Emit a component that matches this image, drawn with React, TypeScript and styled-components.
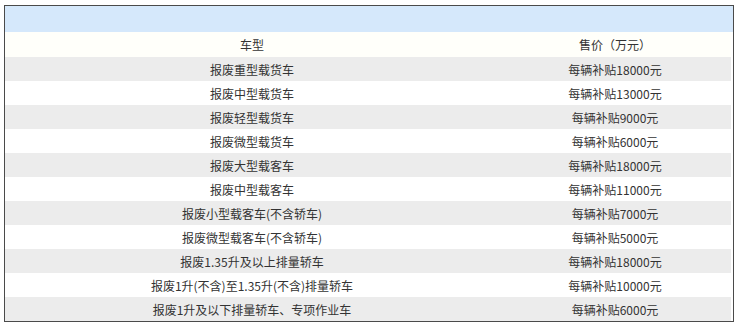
import React from "react";
import styled, { createGlobalStyle } from "styled-components";

const Global = createGlobalStyle`
  html, body { margin: 0; padding: 0; background: #ffffff; }
  body {
    font-family: "Microsoft YaHei", "Noto Sans CJK SC", "Noto Sans", sans-serif;
  }
`;

const Page = styled.div`
  padding: 5px 0 0 4px;
`;

const Table = styled.div`
  width: 728px;
  border: 1px solid #4a4a4a;
  background: #ffffff;
  display: flex;
  flex-direction: column;
`;

const Caption = styled.div`
  height: 26px;
  background: #d5e8fb;
`;

const Row = styled.div<{ $shade: "head" | "gray" | "white" }>`
  display: grid;
  grid-template-columns: 494px 1fr;
  height: ${(p) => (p.$shade === "head" ? 25 : 24)}px;
  margin-right: 2px;
  background: ${(p) =>
    p.$shade === "gray" ? "#ececec" : p.$shade === "head" ? "#fffffa" : "#ffffff"};
`;

const Cell = styled.div`
  display: flex;
  align-items: center;
  justify-content: center;
  font-size: 12px;
  color: #333333;
  white-space: nowrap;
`;

const rows: [string, string][] = [
  ["报废重型载货车", "每辆补贴18000元"],
  ["报废中型载货车", "每辆补贴13000元"],
  ["报废轻型载货车", "每辆补贴9000元"],
  ["报废微型载货车", "每辆补贴6000元"],
  ["报废大型载客车", "每辆补贴18000元"],
  ["报废中型载客车", "每辆补贴11000元"],
  ["报废小型载客车(不含轿车)", "每辆补贴7000元"],
  ["报废微型载客车(不含轿车)", "每辆补贴5000元"],
  ["报废1.35升及以上排量轿车", "每辆补贴18000元"],
  ["报废1升(不含)至1.35升(不含)排量轿车", "每辆补贴10000元"],
  ["报废1升及以下排量轿车、专项作业车", "每辆补贴6000元"],
];

export default function App() {
  return (
    <>
      <Global />
      <Page>
        <Table>
          <Caption />
          <Row $shade="head">
            <Cell>车型</Cell>
            <Cell>售价（万元）</Cell>
          </Row>
          {rows.map(([a, b], i) => (
            <Row key={i} $shade={i % 2 === 0 ? "gray" : "white"}>
              <Cell>{a}</Cell>
              <Cell>{b}</Cell>
            </Row>
          ))}
        </Table>
      </Page>
    </>
  );
}
